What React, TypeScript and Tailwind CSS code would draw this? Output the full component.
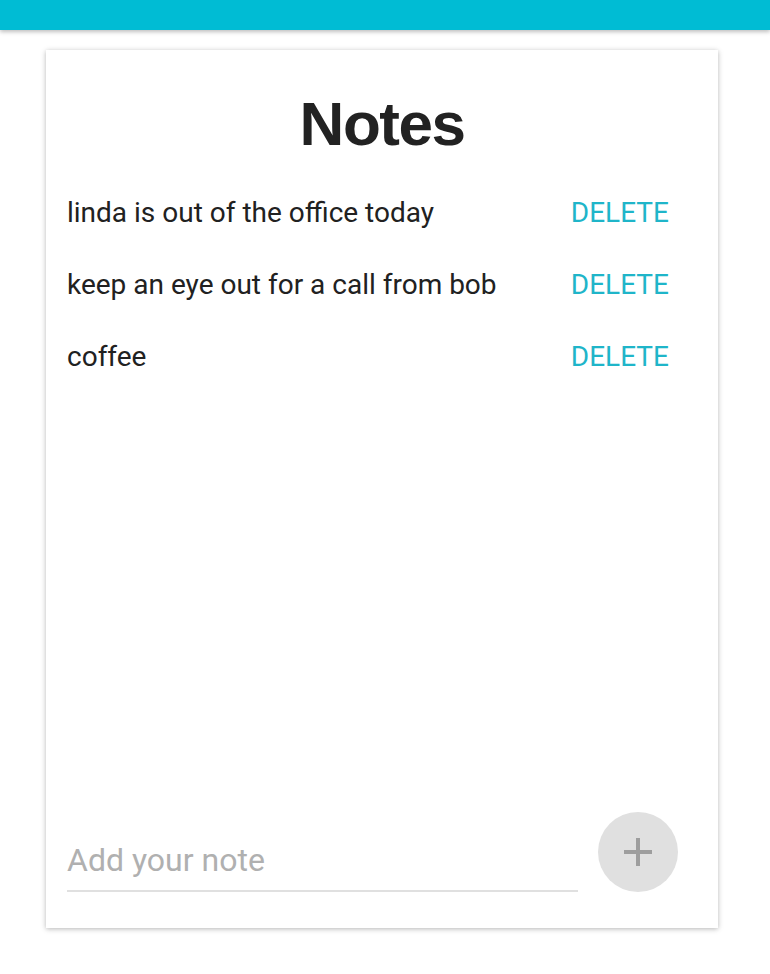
import React from "react";

const notes = [
  "linda is out of the office today",
  "keep an eye out for a call from bob",
  "coffee",
];

export default function App() {
  return (
    <div className="min-h-[974px] w-[770px] bg-white" style={{ fontFamily: "Roboto, 'Liberation Sans', sans-serif" }}>
      <div className="h-[30px] w-full bg-[#00bcd4] shadow-[0_2px_4px_rgba(0,0,0,0.25)]" />
      <div className="mx-[46px] mt-[20px] flex h-[878px] w-[672px] flex-col bg-white shadow-[0_1px_6px_rgba(0,0,0,0.18),0_1px_4px_rgba(0,0,0,0.12)]">
        <h1
          className="mt-[39px] text-center text-[62px] font-bold leading-[70px] tracking-[-1.5px] text-[#222222]"
          style={{ fontFamily: "'Liberation Sans', Arial, sans-serif" }}
        >
          Notes
        </h1>
        <ul className="mt-[18px] flex flex-col">
          {notes.map((n) => (
            <li key={n} className="flex h-[72px] items-center justify-between pl-[21px] pr-[49px]">
              <span className="text-[28px] text-[#212121]">{n}</span>
              <span className="text-[28px] text-[#1fb5c9]">DELETE</span>
            </li>
          ))}
        </ul>
        <div className="mt-auto mb-[36px] flex items-end pl-[21px] pr-[40px]">
          <div className="flex h-[56px] flex-1 flex-col justify-end">
            <div className="pb-[11px] text-[32px] leading-[38px] text-[#b0b0b0]">Add your note</div>
            <div className="h-[2px] w-full bg-[#e0e0e0]" />
          </div>
          <div className="ml-[20px] mb-[0px] flex h-[80px] w-[80px] items-center justify-center rounded-full bg-[#e0e0e0]">
            <svg width="28" height="28" viewBox="0 0 28 28">
              <rect x="12" y="0" width="4" height="28" fill="#9e9e9e" />
              <rect x="0" y="12" width="28" height="4" fill="#9e9e9e" />
            </svg>
          </div>
        </div>
      </div>
    </div>
  );
}
